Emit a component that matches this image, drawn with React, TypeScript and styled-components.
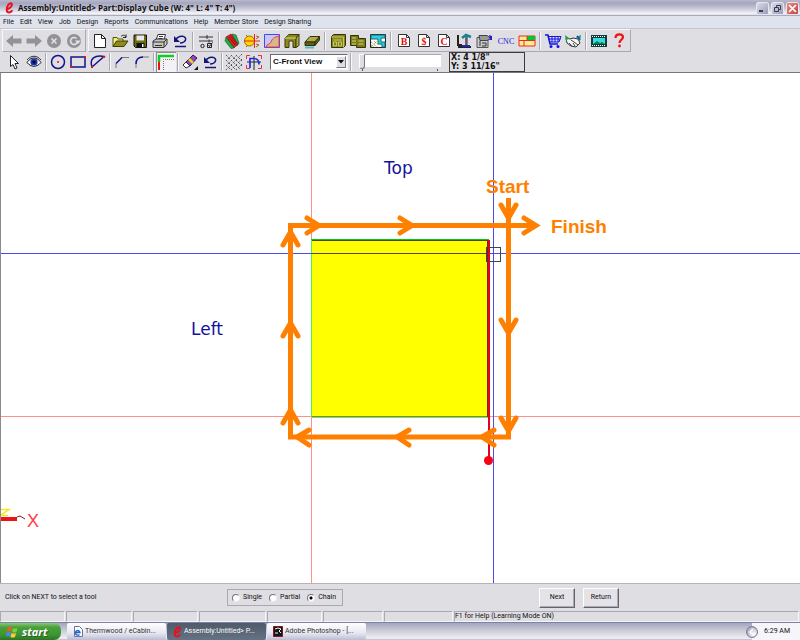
import React from "react";
import styled, { createGlobalStyle, css } from "styled-components";

const GlobalStyle = createGlobalStyle`
  * { box-sizing: border-box; }
  body { margin: 0; background: #dfdee3; }
  button, input, select { font: inherit; color: inherit; margin: 0; padding: 0; }
  svg { display: block; }
`;

const Shell = styled.div`
  display: flex;
  flex-direction: column;
  min-height: 100vh;
  font: 7px/9px Roboto, "Liberation Sans", sans-serif;
  color: #111;
  background: #dfdee3;
`;

const TitleBar = styled.header`
  display: flex;
  align-items: center;
  gap: 4px;
  height: 16px;
  padding: 0 1px 0 5px;
  background: linear-gradient(#b9b9cc 0, #a5a5be 20%, #c3c3d4 50%, #f8f8fb 88%, #8f8fa8 100%);
`;
const Title = styled.h1`
  flex: 1;
  margin: 0;
  font: bold 8px/12px "Open Sans", sans-serif;
  white-space: nowrap;
`;
const WindowButtons = styled.div`
  display: flex;
  gap: 2px;
`;
const WindowButton = styled.button<{ $close?: boolean }>`
  width: 13px;
  height: 13px;
  border: 1px solid #e6e6f0;
  border-radius: 2px;
  color: ${(p) => (p.$close ? "#fff" : "#3c3c50")};
  background: ${(p) => (p.$close ? "linear-gradient(135deg, #e88a84, #c8433e)" : "linear-gradient(135deg, #dcdcea, #9a9ab8)")};
`;

const MenuBar = styled.nav`
  display: flex;
  gap: 6px;
  height: 12px;
  padding-left: 3px;
  align-items: center;
  background: #dfe3ed;
`;
const MenuItem = styled.button`
  border: 0;
  background: none;
  white-space: nowrap;
`;

const ToolRow = styled.div`
  display: flex;
  gap: 2px;
  height: 24px;
  padding-left: 2px;
  border-top: 1px solid #c6c5cc;
`;
const ToolPanel = styled.div`
  display: flex;
  align-items: center;
  padding: 0 1px;
  border: 1px solid;
  border-color: #f8f8fb #aaa9b2 #aaa9b2 #f8f8fb;
`;
const DrawRow = styled.div`
  display: flex;
  align-items: center;
  height: 21px;
  padding-left: 4px;
  border-bottom: 1px solid #77767a;
`;
const ToolButton = styled.button<{ $wide?: boolean; $pressed?: boolean }>`
  display: flex;
  align-items: center;
  justify-content: center;
  width: ${(p) => (p.$wide ? 23 : 20)}px;
  height: 20px;
  border: 0;
  background: none;
  ${(p) =>
    p.$pressed &&
    css`
      background: #f3f2f6;
      box-shadow: inset 1px 1px #8c8b94;
    `}
`;
const Separator = styled.span<{ $narrow?: boolean }>`
  width: 2px;
  height: 18px;
  margin: 0 ${(p) => (p.$narrow ? 1 : 2)}px;
  border-left: 1px solid #aaa9b2;
  border-right: 1px solid #f8f8fb;
`;

const ViewPicker = styled.label`
  display: grid;
  width: 78px;
  height: 16px;
  margin-left: 6px;
  border: 1px solid;
  border-color: #6d6c72 #f4f4f8 #f4f4f8 #6d6c72;
  background: #fff;
  & > * { grid-area: 1 / 1; }
`;
const ViewSelect = styled.select`
  width: 100%;
  padding-left: 2px;
  border: 0;
  appearance: none;
  background: transparent;
  font: bold 8px/12px "Liberation Sans", Arial, sans-serif;
`;
const PickerArrow = styled.span`
  display: flex;
  align-items: center;
  justify-content: center;
  justify-self: end;
  width: 10px;
  margin: 1px;
  border: 1px solid;
  border-color: #fff #77767c #77767c #fff;
  background: #dfdee3;
  pointer-events: none;
`;
const SliderBox = styled.label`
  display: flex;
  flex-direction: column;
  width: 82px;
  margin: 0 8px 0 5px;
`;
const SliderInput = styled.input`
  appearance: none;
  width: 82px;
  height: 15px;
  background: linear-gradient(90deg, transparent 3px, #fff 3px) center / 100% 12px no-repeat;
  box-shadow: inset 0 1px #aaa9b2;
  &::-webkit-slider-thumb {
    appearance: none;
    width: 6px;
    height: 15px;
    border: 1px solid;
    border-color: #fff #77767c #77767c #fff;
    border-radius: 0 0 3px 3px;
    background: #dfdee3;
  }
`;
const Ticks = styled.span`
  display: flex;
  margin: 0 3px;
  height: 2px;
  border: solid #55545a;
  border-width: 0 1px;
`;
const Coordinates = styled.output`
  width: 76px;
  padding: 0 1px;
  border: 1px solid #3c3c40;
  font: bold 8px/9px "DejaVu Sans", sans-serif;
  white-space: nowrap;
`;
const CoordinateLine = styled.div``;

const Viewport = styled.main`
  display: flex;
  flex: 1;
  min-height: 500px;
  border-left: 1px solid #8b8a90;
  background: #fff;
`;
const Drawing = styled.svg`
  flex: 1;
  min-width: 0;
  overflow: hidden;
`;

const CommandBar = styled.section`
  display: grid;
  grid-template-columns: 222px 1fr auto;
  align-items: center;
  height: 28px;
  padding: 0 181px 0 5px;
  border-top: 1px solid #b4b3ba;
`;
const Prompt = styled.p`
  margin: 0;
`;
const ModeGroup = styled.fieldset`
  display: flex;
  align-items: center;
  justify-self: start;
  gap: 7px;
  height: 17px;
  margin: 0;
  padding: 0 6px 0 4px;
  border: 1px solid #aaa9b2;
`;
const RadioLabel = styled.label`
  display: flex;
  align-items: center;
  gap: 3px;
`;
const Radio = styled.input`
  appearance: none;
  width: 8px;
  height: 8px;
  border: 1px solid;
  border-color: #77767c #eee #eee #77767c;
  border-radius: 50%;
  background: #fff;
  &:checked { background: radial-gradient(circle, #000 0 1px, #fff 2px); }
`;
const Actions = styled.div`
  display: flex;
  gap: 8px;
`;
const PushButton = styled.button`
  width: 36px;
  height: 20px;
  border: 1px solid;
  border-color: #fff #66656a #66656a #fff;
  box-shadow: inset -1px -1px #aaa9b2;
  background: #e4e3e8;
`;

const StatusBar = styled.footer`
  display: grid;
  grid-template-columns: 66px 67px 66px 68px 56px 61px 70px 1fr;
  height: 11px;
`;
const StatusCell = styled.div`
  margin-right: 1px;
  border: 1px solid;
  border-color: #aaa9b2 #f6f6fa #f6f6fa #aaa9b2;
`;

const TaskBar = styled.footer`
  display: flex;
  height: 18px;
  border-top: 1px solid #7d82a4;
  background: linear-gradient(#a2a6c0, #c3c4d2 35%, #f0eff4 90%, #b5b5c8);
`;
const StartButton = styled.button`
  display: flex;
  align-items: center;
  gap: 4px;
  width: 61px;
  margin-right: 6px;
  padding-left: 6px;
  border: 0;
  border-radius: 0 7px 7px 0;
  color: #fff;
  font: italic bold 11px/14px "Open Sans", sans-serif;
  text-shadow: 1px 1px #28601f;
  background: linear-gradient(#8bc878, #4aa03c 25%, #3b9530 70%, #2b7425);
`;
const TaskButton = styled.button<{ $active?: boolean }>`
  display: flex;
  align-items: center;
  gap: 2px;
  width: 99px;
  margin-right: 1px;
  padding-left: 6px;
  border: 0;
  border-radius: 2px;
  white-space: nowrap;
  color: ${(p) => (p.$active ? "#fff" : "#333")};
  background: ${(p) => (p.$active ? "linear-gradient(#4f5b6b, #657283)" : "linear-gradient(#fff, #e7e7f1 60%, #bbbcd3)")};
`;
const Tray = styled.div`
  display: flex;
  align-items: center;
  gap: 6px;
  margin-left: auto;
  padding-right: 10px;
  background: linear-gradient(90deg, transparent 6px, #f5f5fa 6px);
`;
const TrayToggle = styled.button`
  width: 12px;
  height: 12px;
  border: 1px solid #77789a;
  border-radius: 50%;
  background: radial-gradient(circle at 70% 70%, #fff, #8f90ac);
`;

const Logo = () => (
  <svg width="9" height="12" viewBox="0 0 9 12" aria-hidden="true">
    <path d="M1.2 7.2C4 7.2 7.6 4.6 6.8 2 6 .2 3.4 1.6 2.2 5 1 8.4 2 10.8 4 10.6 5.4 10.4 6.6 9.4 7.4 8.2" fill="none" stroke="#e8101c" strokeWidth="2" />
  </svg>
);

const sheet = <path d="M3.5 1.5h7l4 4v9h-11z" fill="#fff" stroke="#222" />;
const letterSheet = (letter: string) => (
  <>
    <path d="M3.5 1.5h8l3 3v9h-11z" fill="#fff" stroke="#333" />
    <path d="M11.5 1.5v3h3" fill="none" stroke="#333" />
    <text x="9" y="12" textAnchor="middle" fontFamily="Liberation Serif" fontWeight="bold" fontSize="10" fill="#e81010">{letter}</text>
  </>
);
const undo = (
  <>
    <path d="M4 7.500C8 1 16 3 14.500 7 13.500 9.500 11 10 9 10" fill="none" stroke="#14147c" strokeWidth="1.500" />
    <path d="M3 3v6h6z" fill="#14147c" />
    <path d="M4 13.500h11" stroke="#14147c" strokeWidth="1.500" />
  </>
);

const icons: Record<string, React.ReactNode> = {
  Back: <path d="M1 8l7-6v3.500h8.500v5H8V14z" fill="#929297" />,
  Forward: <path d="M17 8l-7-6v3.500H1.500v5H10V14z" fill="#929297" />,
  Stop: <><circle cx="9" cy="8" r="7" fill="#929297" /><path d="M6.500 5.500l5 5m0-5l-5 5" stroke="#e2e1e6" strokeWidth="1.600" /></>,
  Refresh: <><circle cx="9" cy="8" r="7" fill="#929297" /><path d="M11.500 5.500a3.500 3.500 0 1 0 1 3" fill="none" stroke="#e2e1e6" strokeWidth="1.600" /><path d="M10 7.500h6L13 11z" fill="#e2e1e6" /></>,
  New: <>{sheet}<path d="M10.500 1.500v4h4" fill="none" stroke="#222" /></>,
  Open: <><path d="M2 13.500v-9h4l1 1.500h5v2" fill="#f0f080" stroke="#55550a" /><path d="M2 13.500L5.500 8H17l-4 5.500z" fill="#8d8d16" stroke="#3e3e08" /><path d="M10 3.500c2-2 4-1.500 5 .5m0-2.500v3h-3" fill="none" stroke="#222" /></>,
  Save: <><path d="M3 2h12.500v12.500H4.500L3 13z" fill="#6d6d12" stroke="#111" /><path d="M5.500 2.500h7.500v5H5.500z" fill="#e7e6ea" /><path d="M5.500 10h8v4.500h-8z" fill="#111" /><path d="M11 11h1.500v3H11z" fill="#fff" /></>,
  Print: <><path d="M5 7l2-5.500h7.500L13 7" fill="#fff" stroke="#333" /><path d="M2 8l3-2h11v5l-3 3.500H2z" fill="#c5c4ca" stroke="#333" /><path d="M2 9h11l3-3M13 9v5M4 12.500h7M8 3.500h4m-4.500 2h4" fill="none" stroke="#333" /><path d="M9 11h2" stroke="#ddd020" strokeWidth="1.500" /></>,
  Undo: undo,
  Settings: <><path d="M2 4h14M2 8h14M10 2v4M12 6.500v3" fill="none" stroke="#333" /><path d="M10.500 10.500h4v4h-4zM11.500 12l1 1.500 3-4" fill="none" stroke="#222" /><circle cx="5.500" cy="13" r="1.700" fill="none" stroke="#222" /></>,
  Materials: <><path d="M9 1l4 1 3 8-2 3-4-2z" fill="#18b048" stroke="#0d5a26" strokeWidth=".6" /><path d="M3 4l5-3 7 10-4 4z" fill="#e01c22" stroke="#6d0e12" strokeWidth=".6" /><path d="M3 4l8 11-3 .5L2 8z" fill="#18b048" stroke="#0d5a26" strokeWidth=".6" /><path d="M6 4l6 8M8 3l5 8" stroke="#8a1014" strokeWidth=".8" /></>,
  Hardware: <><circle cx="6.500" cy="8" r="5" fill="#ffd600" stroke="#a06b00" /><path d="M1 8h16M11.500 1v14" stroke="#ee2020" /><path d="M13 3l3 1-3 2m0 5l3 1-3 2M3 2l2 2m-2 10l2-2" fill="none" stroke="#967010" /></>,
  Profile: <><path d="M1.500 1.500h15v13h-15z" fill="#c7c7f7" stroke="#4848f0" /><path d="M3 14c0-3 4-2 5-5s3-5 8-6v11z" fill="#d9ba87" stroke="#e04040" /></>,
  Cabinet: <><path d="M2 14.500V5l4-3.500h10L13 5v9.500h-3V8H6v6.500z" fill="#8b8b1c" stroke="#3b3b0a" /><path d="M13 5l3-3.500v11l-3 2z" fill="#aaa94b" stroke="#3b3b0a" /><path d="M2 5h11" stroke="#ddd488" /></>,
  Board: <><path d="M2 9l5-5.500h9.500L12 9z" fill="#adad50" stroke="#333308" /><path d="M2 9h10v3.500H2zM12 9l4.500-5.500V7L12 12.500z" fill="#61610f" stroke="#333308" /><path d="M2 14.500h9" stroke="#51bac2" strokeWidth="2" /></>,
  Base: <><path d="M2.500 3.500l2-2h12v11l-2 2h-12z" fill="#85851b" stroke="#333308" /><path d="M2.500 4h12v10.500M4.500 7h8M4.500 9h3v4h-3zm5 0h3v4h-3z" fill="none" stroke="#c9c66a" /></>,
  Assembly: <><path d="M1.500 2.500h8v3h7v9h-9v-2h-6z" fill="#7a7a18" stroke="#333308" /><path d="M3 5h4m-4 3h4m-4 3h4M9.500 8h5m-5 3h5" stroke="#d9d67a" /></>,
  Room: <><path d="M1.500 1.500h15v13h-15z" fill="#fff" stroke="#222" /><path d="M2 2h14v3h-4v4h4v5h-3v-3h-4V6H2z" fill="#30cddd" stroke="#136a77" /><path d="M2 9l6 5M2 12l3 2M5 8l4 4M2 14l6-6" stroke="#85851b" strokeDasharray="1 1" /></>,
  Buy: letterSheet("B"),
  Cost: letterSheet("$"),
  Cut: letterSheet("C"),
  Machine: <><path d="M3 2v10h4M3 14h13" fill="none" stroke="#222" strokeWidth="2" /><path d="M7 5l4-3 5 2M11.500 3v9" fill="none" stroke="#207f92" strokeWidth="2.500" /><path d="M11 5v8" stroke="#db2020" /><path d="M7 13h8" stroke="#2525bb" strokeWidth="2" /></>,
  Nest: <><path d="M2 4.500h11v10H2z" fill="#cbcad0" stroke="#555" /><path d="M4 2.500h8l4 3-4 2H5z" fill="#999" stroke="#444" /><path d="M5 8v5m2-3h4v3H7" fill="none" stroke="#333" /><path d="M14 2l3 1v4h-2z" fill="#2020e0" /></>,
  CNC: <text x="9" y="11" textAnchor="middle" fontFamily="Liberation Serif" fontSize="8" fill="#2020e0">CNC</text>,
  Layout: <><path d="M1 3h16v10H1z" fill="#ffef93" stroke="#ee2a20" /><path d="M9 3h8v4H9z" fill="#00c830" /><path d="M1 7.500h16M9 3v4.500M6 7.500V13" stroke="#ee2a20" /></>,
  Cart: <><path d="M1 2h3l2 9h8" fill="none" stroke="#1515dd" strokeWidth="1.500" /><path d="M4 3.500h13L15 9H6zM4.500 6h12M8 3.500V9m3-5.500V9m3-5.500V9" fill="none" stroke="#1515dd" /><circle cx="7" cy="13.500" r="1.500" fill="#1515dd" /><circle cx="14" cy="13.500" r="1.500" fill="#1515dd" /></>,
  Share: <><path d="M2 5l4 1 3-1 5 1 2 4-4 4-5-1-4-3z" fill="#f5f5f5" stroke="#333" /><path d="M7 7l3 2 4 3M5 10l3 3m1-3l2 3" fill="none" stroke="#444" /><path d="M1 2l4 3-3 3zM17 2l-5 2 4 4z" fill="#1da545" /><path d="M13 3l3 4" stroke="#2346cc" strokeWidth="1.500" /></>,
  Video: <><path d="M1 2h16v12H1z" fill="#123c3c" /><path d="M3 5h12v6H3z" fill="#35dce0" /><path d="M3 11l4-3 3 2 2-1 3 2z" fill="#117a3c" /><path d="M2 3.500h14M2 12.500h14" stroke="#fff" strokeDasharray="1 1" /></>,
  Help: <><path d="M5.500 5c0-5 7.500-4.500 7.500-1 0 2.500-3.500 3-3.500 6" fill="none" stroke="#ee1414" strokeWidth="2.200" /><circle cx="9.500" cy="13" r="1.400" fill="#ee1414" /></>,
  Select: <path d="M5.500 1.500v11l2.500-2 2 4.500 2-1-2-4.500h3.500z" fill="#fff" stroke="#222" />,
  View: <><path d="M2 8.500c4-6 10-6 14 0-4 5-10 5-14 0z" fill="#fff" stroke="#111" /><circle cx="9" cy="8" r="3.600" fill="#1c35bb" /><circle cx="9" cy="8" r="1.500" fill="#000" /><path d="M2 6c4-5 10-5 14 0" fill="none" stroke="#333" /></>,
  Circle: <><circle cx="9" cy="8" r="6.500" fill="none" stroke="#14148c" strokeWidth="1.500" /><circle cx="9" cy="8" r="1" fill="#e81414" /></>,
  Rectangle: <><path d="M2 3h14v10H2z" fill="none" stroke="#14148c" strokeWidth="1.500" /><path d="M15 2h2v2h-2zM1 12h2v2H1z" fill="#e81414" /></>,
  Arc: <><path d="M3 13C0 4 6 1 15 2.500L3 13z" fill="none" stroke="#14148c" strokeWidth="1.500" /><path d="M2 12h2v2H2zM14 2h2v2h-2z" fill="#e81414" /></>,
  Chamfer: <><path d="M3 14V9.500M8 3.500h8" stroke="#777" /><path d="M3 9.500l6-6" stroke="#14148c" strokeWidth="1.500" /></>,
  Fillet: <><path d="M3 14v-4M9 3h7" stroke="#777" /><path d="M3 10c0-4 2-7 7-7" fill="none" stroke="#14148c" strokeWidth="1.500" /></>,
  Edge: <><path d="M2 8V2h15" fill="none" stroke="#10cd25" strokeWidth="2.500" /><path d="M2 8v8" stroke="#e81414" strokeWidth="2" /><path d="M6.500 16V5.500H17" fill="none" stroke="#777" strokeDasharray="1 1" /></>,
  Erase: <><path d="M2 11l3 3 4-2-4-4z" fill="#fff" stroke="#333" /><path d="M5 8l7-7 4 3-7 8z" fill="#8b48b8" stroke="#35194c" /><path d="M8 5l4 4" stroke="#e8d420" strokeWidth="2.500" /><path d="M17 12v4h-4z" fill="#111" /></>,
  Revert: undo,
  Grid: <path d="M1 1l15 15M6 1l11 11M11 1l6 6M1 6l10 10M1 11l5 5M17 0L1 16M12 1L1 12M7 1L1 7M17 5L6 16M17 10l-6 6" stroke="#55545a" strokeDasharray="2 1.500" />,
  Snap: <><path d="M1.500 5V1.500H5M13 1.500h3.500V5M1.500 11v3.500H5M13 14.500h3.500V11" fill="none" stroke="#ee3030" /><path d="M9 2v14M2 8h14" stroke="#222" /><path d="M5 14V4.500h4c3 0 5 2 5 6" fill="none" stroke="#1c2ee5" strokeWidth="1.700" /></>,
};

const Tool = ({ name, wide, pressed, disabled }: { name: string; wide?: boolean; pressed?: boolean; disabled?: boolean }) => (
  <ToolButton type="button" aria-label={name} $wide={wide} $pressed={pressed} disabled={disabled}>
    <svg width="18" height="16" viewBox="0 0 18 16" overflow="visible" aria-hidden="true">{icons[name]}</svg>
  </ToolButton>
);

const ToolGroups = ({ groups, narrow }: { groups: string[][]; narrow?: boolean }) => (
  <>
    {groups.map((group, index) => (
      <React.Fragment key={group[0]}>
        {index > 0 && <Separator $narrow={narrow} />}
        {group.map((name) => <Tool key={name} name={name} wide={name === "CNC"} pressed={name === "Edge"} />)}
      </React.Fragment>
    ))}
  </>
);

const menus = ["File", "Edit", "View", "Job", "Design", "Reports", "Communications", "Help", "Member Store", "Design Sharing"];
const fileGroups = [
  ["New", "Open", "Save", "Print", "Undo"],
  ["Settings"],
  ["Materials", "Hardware", "Profile", "Cabinet", "Board"],
  ["Base", "Assembly", "Room"],
  ["Buy", "Cost", "Cut", "Machine", "Nest", "CNC", "Layout"],
  ["Cart", "Share"],
  ["Video", "Help"],
];
const drawGroups = [["Select", "View"], ["Circle", "Rectangle", "Arc"], ["Chamfer", "Fillet"], ["Edge"], ["Erase", "Revert"], ["Grid", "Snap"]];

const arrowHeads = [
  "M306 145l12 7.500-12 7.500", "M399 145l12 7.500-12 7.500", "M523 145l12 7.500-12 7.500",
  "M500 132l7.500 13 7.500-13", "M500 247l7.500 13 7.500-13", "M500 345l7.500 13 7.500-13",
  "M282 172l7.500-13 7.500 13", "M282 263l7.500-13 7.500 13", "M282 350l7.500-13 7.500 13",
  "M308 357l-12 7 12 8", "M408 357l-12 7 12 8", "M493 357l-12 7 12 8",
];

const PartDrawing = () => (
  <Drawing role="img" aria-label="Front view of the part with its cutting path">
    <rect x="310" y="167" width="177" height="177" fill="#ffff00" />
    <g shapeRendering="crispEdges" fill="none">
      <path d="M310.500 344V167" stroke="#50f050" />
      <path d="M310 166.500h178" stroke="#00c820" />
      <path d="M311 167.500h176" stroke="#4c4c08" />
      <path d="M310 344.500h178" stroke="#70e868" />
      <line x1="310.500" y1="0" x2="310.500" y2="166" stroke="#ff9088" />
      <line x1="310.500" y1="345" x2="310.500" y2="100%" stroke="#ff9088" />
      <line x1="0" y1="343.500" x2="100%" y2="343.500" stroke="#ff9088" />
      <path d="M311 343.500h176" stroke="#90802c" />
      <line x1="0" y1="180.500" x2="100%" y2="180.500" stroke="#4c4ce6" />
      <path d="M311 180.500h176" stroke="#4c4c40" />
      <line x1="492.500" y1="0" x2="492.500" y2="100%" stroke="#4c4ce6" />
      <path d="M487.500 167v220" stroke="#e50020" strokeWidth="2" />
      <path d="M486.500 168v176" stroke="#7d2020" />
      <rect x="485.500" y="174.500" width="14" height="14" stroke="#444" />
    </g>
    <circle cx="487.500" cy="387.500" r="4.500" fill="#fa0010" />
    <g fill="none" stroke="#ff8000" strokeWidth="5">
      <path d="M507.500 125v239H289.500V152.500H534" strokeLinejoin="miter" />
      {arrowHeads.map((d) => <path key={d} d={d} strokeLinecap="round" />)}
    </g>
    <g fontFamily="Liberation Sans, Arial, sans-serif" fontWeight="bold" fontSize="19" fill="#ff8000">
      <text x="485" y="120">Start</text>
      <text x="550" y="160">Finish</text>
    </g>
    <g fontFamily="DejaVu Sans, sans-serif" fontSize="17" fill="#1212a0">
      <text x="383" y="101">Top</text>
      <text x="190" y="262">Left</text>
    </g>
    <path d="M-2 436.500h10L-1 442.500h8" fill="none" stroke="#f0e820" strokeWidth="1.500" />
    <path d="M0 446h16" stroke="#f01018" strokeWidth="4" />
    <path d="M16 444l3-1 5 3" fill="none" stroke="#7b2020" />
    <text x="26" y="454" fontFamily="Liberation Sans, sans-serif" fontSize="18" fill="#ff3c44">X</text>
  </Drawing>
);

export default function App() {
  return (
    <Shell>
      <GlobalStyle />
      <TitleBar>
        <Logo />
        <Title>Assembly:Untitled&gt; Part:Display Cube (W: 4" L: 4" T: 4")</Title>
        <WindowButtons>
          <WindowButton type="button" aria-label="Minimize"><svg width="11" height="11"><path d="M2 8h4" stroke="currentColor" strokeWidth="2" /></svg></WindowButton>
          <WindowButton type="button" aria-label="Restore"><svg width="11" height="11"><path d="M4.500 4V2.500h4v4H7M2.500 4.500h4v4h-4z" fill="none" stroke="currentColor" /></svg></WindowButton>
          <WindowButton type="button" aria-label="Close" $close><svg width="11" height="11"><path d="M2 2l7 7m0-7L2 9" stroke="currentColor" strokeWidth="1.700" /></svg></WindowButton>
        </WindowButtons>
      </TitleBar>
      <MenuBar>{menus.map((label) => <MenuItem type="button" key={label}>{label}</MenuItem>)}</MenuBar>
      <ToolRow role="toolbar" aria-label="Main">
        <ToolPanel>{["Back", "Forward", "Stop", "Refresh"].map((name) => <Tool key={name} name={name} disabled />)}</ToolPanel>
        <ToolPanel><ToolGroups groups={fileGroups} /></ToolPanel>
      </ToolRow>
      <DrawRow role="toolbar" aria-label="Drawing">
        <ToolGroups groups={drawGroups} narrow />
        <ViewPicker>
          <ViewSelect aria-label="View" defaultValue="front"><option value="front">C-Front View</option></ViewSelect>
          <PickerArrow><svg width="6" height="4"><path d="M0 0h6L3 3.500z" fill="#111" /></svg></PickerArrow>
        </ViewPicker>
        <Separator />
        <SliderBox>
          <SliderInput type="range" aria-label="Zoom" defaultValue="0" />
          <Ticks />
        </SliderBox>
        <Coordinates>
          <CoordinateLine>X: 4 1/8"</CoordinateLine>
          <CoordinateLine>Y: 3 11/16"</CoordinateLine>
        </Coordinates>
      </DrawRow>
      <Viewport><PartDrawing /></Viewport>
      <CommandBar>
        <Prompt>Click on NEXT to select a tool</Prompt>
        <ModeGroup aria-label="Selection mode">
          <RadioLabel><Radio type="radio" name="mode" />Single</RadioLabel>
          <RadioLabel><Radio type="radio" name="mode" />Partial</RadioLabel>
          <RadioLabel><Radio type="radio" name="mode" defaultChecked />Chain</RadioLabel>
        </ModeGroup>
        <Actions>
          <PushButton type="button">Next</PushButton>
          <PushButton type="button">Return</PushButton>
        </Actions>
      </CommandBar>
      <StatusBar>
        {[0, 1, 2, 3, 4, 5, 6].map((cell) => <StatusCell key={cell} />)}
        <StatusCell>F1 for Help (Learning Mode ON)</StatusCell>
      </StatusBar>
      <TaskBar>
        <StartButton type="button">
          <svg width="12" height="12" viewBox="0 0 12 12" aria-hidden="true">
            <path d="M2 1.500q2-1.500 4 0L5 5.500q-2-1-4 0z" fill="#ef5a2a" />
            <path d="M7 2q2 1 4.500 0l-1 4q-2 1-4.500 0z" fill="#7ccc3c" />
            <path d="M1 6.500q2-1.500 4 0L4 10.500q-2-1-4 0z" fill="#4a86ee" />
            <path d="M5.500 7q2 1 4.500 0l-1 4q-2 1-4.500 0z" fill="#f9cf30" />
          </svg>
          start
        </StartButton>
        <TaskButton type="button">
          <svg width="10" height="11" viewBox="0 0 10 11" aria-hidden="true">
            <path d="M1.500.5h5l3 3v7h-8z" fill="#fff" stroke="#6673a0" />
            <path d="M2.500 6.500h4.500a2.300 2.300 0 1 0-.6 1.900" fill="none" stroke="#2164ce" strokeWidth="1.400" />
          </svg>
          Thermwood / eCabin...
        </TaskButton>
        <TaskButton type="button" $active><Logo />Assembly:Untitled&gt; P...</TaskButton>
        <TaskButton type="button">
          <svg width="10" height="11" viewBox="0 0 10 11" aria-hidden="true">
            <path d="M.5.5h9v10h-9z" fill="#17171b" stroke="#811820" />
            <path d="M2 3l3-1 3 1-2 2 2 2M2 7h3" fill="none" stroke="#f3f3f3" />
          </svg>
          Adobe Photoshop - [...
        </TaskButton>
        <Tray>
          <TrayToggle type="button" aria-label="Show hidden icons"><svg width="10" height="10"><path d="M6 2L3 5l3 3" fill="none" stroke="#fff" strokeWidth="1.500" /></svg></TrayToggle>
          <time>6:29 AM</time>
        </Tray>
      </TaskBar>
    </Shell>
  );
}
